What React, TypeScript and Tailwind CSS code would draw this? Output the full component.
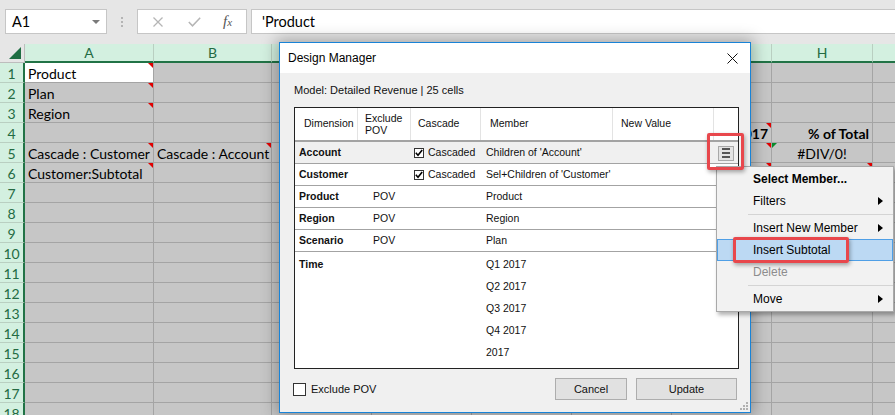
import React from "react";

type Cell = {
  text?: string;
  bold?: boolean;
  align?: "left" | "right" | "center";
  red?: boolean;
  green?: boolean;
  white?: boolean;
};

const COLS = ["A", "B", "C", "D", "E", "F", "G", "H", "I"];

const CELLS: Record<string, Cell> = {
  A1: { text: "Product", red: true, white: true },
  A2: { text: "Plan", red: true },
  A3: { text: "Region", red: true },
  A5: { text: "Cascade : Customer", red: true },
  B5: { text: "Cascade : Account", red: true },
  A6: { text: "Customer:Subtotal", red: true },
  G4: { text: "2017", bold: true, align: "right", red: true },
  H4: { text: "% of Total", bold: true, align: "right" },
  G5: { red: true },
  H5: { text: "#DIV/0!", align: "center", green: true },
  G6: { red: true },
  H6: { red: true },
};

const ROWS = Array.from({ length: 18 }, (_, i) => i + 1);

function SheetCell({ id }: { id: string }) {
  const c = CELLS[id] ?? {};
  const align =
    c.align === "right" ? "justify-end" : c.align === "center" ? "justify-center" : "justify-start";
  return (
    <div
      className={`relative flex h-[20px] items-center overflow-visible whitespace-nowrap border-r border-b border-[#a4a4a4] px-[3px] pt-[1px] text-[14px] text-black ${
        c.white ? "bg-white" : "bg-[#c6c6c6]"
      } ${align} ${c.bold ? "font-bold" : ""}`}
    >
      {c.text}
      {c.red ? (
        <span className="absolute top-0 right-0 h-0 w-0 border-t-[5px] border-l-[5px] border-t-[#e00000] border-l-transparent" />
      ) : null}
      {c.green ? (
        <span className="absolute top-0 left-0 h-0 w-0 border-t-[5px] border-r-[5px] border-t-[#0a8a2c] border-r-transparent" />
      ) : null}
    </div>
  );
}

function FormulaBar() {
  return (
    <div className="flex h-[44px] items-start pt-[9px]">
      <div className="ml-[5px] flex h-[25px] w-[102px] items-center justify-between border border-[#c6c6c6] bg-white pr-[6px] pl-[6px] text-[14.5px] text-black">
        <span>A1</span>
        <span className="h-0 w-0 border-x-[4px] border-t-[4px] border-x-transparent border-t-[#7a7a7a]" />
      </div>
      <div className="ml-[14px] flex h-[25px] flex-col items-center justify-center gap-[2px]">
        <span className="h-[2px] w-[2px] bg-[#b4b4b4]" />
        <span className="h-[2px] w-[2px] bg-[#b4b4b4]" />
        <span className="h-[2px] w-[2px] bg-[#b4b4b4]" />
      </div>
      <div className="ml-[14px] flex h-[25px] w-[110px] items-center border border-[#c6c6c6] bg-white pl-[15px]">
        <svg width="10" height="10" viewBox="0 0 10 10">
          <path d="M0.5 0.5 L9.5 9.5 M9.5 0.5 L0.5 9.5" stroke="#b5b5b5" strokeWidth="1.3" fill="none" />
        </svg>
        <svg className="ml-[25px]" width="13" height="10" viewBox="0 0 13 10">
          <path d="M0.8 5 L4.5 8.8 L12.2 0.8" stroke="#b5b5b5" strokeWidth="1.5" fill="none" />
        </svg>
        <span className="ml-[22px] font-['Liberation_Serif',serif] text-[15px] italic leading-none text-[#555]">
          f<span className="text-[11px]">x</span>
        </span>
      </div>
      <div className="mr-[-4px] ml-[4px] flex h-[25px] flex-1 items-center border border-[#c6c6c6] bg-white pl-[10px] text-[14.5px] text-black">
        'Product
      </div>
    </div>
  );
}

function Sheet() {
  return (
    <div className="grid w-[973px] grid-cols-[25px_129px_118px_100px_100px_100px_100px_100px_101px_100px] text-[#246b43]">
      <div className="relative h-[19px] border-r border-b border-[#bdbdbd] bg-[#e6e6e6]">
        <svg className="absolute right-[3px] bottom-[3px]" width="12" height="12" viewBox="0 0 12 12">
          <polygon points="12,0 12,12 0,12" fill="#1f6e43" />
        </svg>
      </div>
      {COLS.map((c) => (
        <div
          key={c}
          className="flex h-[19px] items-center justify-center border-r border-b-2 border-r-[#b9cfc1] border-b-[#217346] bg-[#d3f0e0] text-[14px]"
        >
          {c}
        </div>
      ))}
      {ROWS.map((r) => (
        <React.Fragment key={r}>
          <div className="flex h-[20px] items-center justify-center border-r-2 border-b border-r-[#217346] border-b-[#b9cfc1] bg-[#d3f0e0] pt-[1px] text-[14px]">
            {r}
          </div>
          {COLS.map((c) => (
            <SheetCell key={c} id={`${c}${r}`} />
          ))}
        </React.Fragment>
      ))}
    </div>
  );
}

function SmallCheck() {
  return (
    <span className="flex h-[10px] w-[10px] items-center justify-center border border-[#333] bg-white">
      <svg width="8" height="8" viewBox="0 0 8 8">
        <path d="M0.8 3.8 L3 6.2 L7.2 1" stroke="#000" strokeWidth="1.6" fill="none" />
      </svg>
    </span>
  );
}

const TABLE_COLS = "grid grid-cols-[63px_53px_70px_132px_101px_24px]";

const DIMS = [
  { dim: "Account", pov: "", cascade: true, member: "Children of 'Account'", menu: true, shaded: true },
  { dim: "Customer", pov: "", cascade: true, member: "Sel+Children of 'Customer'" },
  { dim: "Product", pov: "POV", member: "Product" },
  { dim: "Region", pov: "POV", member: "Region" },
  { dim: "Scenario", pov: "POV", member: "Plan" },
];

function DesignManager() {
  return (
    <div className="absolute top-[42px] left-[279px] flex h-[371px] w-[472px] flex-col border border-[#1883d7] bg-[#f0f0f0] font-['Liberation_Sans',Arial,sans-serif] text-[#111] shadow-[0_0_14px_3px_rgba(0,0,0,0.28)]">
      <div className="flex h-[30px] shrink-0 items-center justify-between bg-white pr-[12px] pl-[8px] text-[12px] text-black">
        <span>Design Manager</span>
        <svg width="11" height="11" viewBox="0 0 11 11">
          <path d="M0.5 0.5 L10.5 10.5 M10.5 0.5 L0.5 10.5" stroke="#111" strokeWidth="1" fill="none" />
        </svg>
      </div>
      <div className="flex h-[34px] shrink-0 items-center pl-[14px] text-[11px]">Model: Detailed Revenue | 25 cells</div>

      <div className="ml-[14px] flex h-[262px] w-[445px] shrink-0 flex-col border border-[#222] bg-white text-[10.5px]">
        <div className={`${TABLE_COLS} h-[34px] border-b-2 border-[#a3a3a3]`}>
          <div className="flex items-center border-r border-[#e3e3e3] pl-[9px]">Dimension</div>
          <div className="flex items-center border-r border-[#e3e3e3] pl-[7px] leading-[12px]">
            Exclude
            <br />
            POV
          </div>
          <div className="flex items-center border-r border-[#e3e3e3] pl-[7px]">Cascade</div>
          <div className="flex items-center border-r border-[#e3e3e3] pl-[9px]">Member</div>
          <div className="flex items-center border-r border-[#e3e3e3] pl-[8px]">New Value</div>
          <div />
        </div>
        {DIMS.map((d) => (
          <div
            key={d.dim}
            className={`${TABLE_COLS} h-[22px] items-center border-b border-[#a3a3a3] pt-[1px] ${d.shaded ? "bg-[#f0f0f0]" : "bg-white"}`}
          >
            <div className="pl-[4px] font-bold">{d.dim}</div>
            <div className="pl-[15px]">{d.pov}</div>
            <div className="flex items-center pl-[3px]">
              {d.cascade ? (
                <>
                  <SmallCheck />
                  <span className="ml-[4px]">Cascaded</span>
                </>
              ) : null}
            </div>
            <div className="pl-[5px] whitespace-nowrap">{d.member}</div>
            <div />
            <div className="flex justify-center">
              {d.menu ? (
                <span className="flex h-[15px] w-[16px] flex-col items-center justify-center gap-[2px] border border-[#a9a9a9] bg-[#e3e3e3]">
                  <span className="h-[2px] w-[8px] bg-[#555]" />
                  <span className="h-[2px] w-[8px] bg-[#555]" />
                  <span className="h-[2px] w-[8px] bg-[#555]" />
                </span>
              ) : null}
            </div>
          </div>
        ))}
        <div className={`${TABLE_COLS} pt-[2px]`}>
          <div className="flex h-[22px] items-center pl-[4px] font-bold">Time</div>
          <div />
          <div />
          <div className="flex flex-col pl-[5px]">
            {["Q1 2017", "Q2 2017", "Q3 2017", "Q4 2017", "2017"].map((t) => (
              <div key={t} className="flex h-[22px] items-center">
                {t}
              </div>
            ))}
          </div>
          <div />
          <div />
        </div>
      </div>

      <div className="flex h-[40px] shrink-0 items-center pr-[13px] pl-[13px] text-[11px]">
        <span className="h-[13px] w-[13px] border border-[#333] bg-white" />
        <span className="ml-[5px]">Exclude POV</span>
        <div className="ml-auto flex gap-[9px]">
          <div className="flex h-[22px] w-[72px] items-center justify-center border border-[#adadad] bg-[#e1e1e1]">Cancel</div>
          <div className="flex h-[22px] w-[101px] items-center justify-center border border-[#adadad] bg-[#e1e1e1]">Update</div>
        </div>
      </div>
      <svg className="absolute right-[2px] bottom-[2px]" width="9" height="9" viewBox="0 0 9 9">
        <g fill="#b0b0b0">
          <rect x="7" y="1" width="2" height="2" />
          <rect x="4" y="4" width="2" height="2" />
          <rect x="7" y="4" width="2" height="2" />
          <rect x="1" y="7" width="2" height="2" />
          <rect x="4" y="7" width="2" height="2" />
          <rect x="7" y="7" width="2" height="2" />
        </g>
      </svg>
    </div>
  );
}

function Arrow() {
  return (
    <svg width="5" height="8" viewBox="0 0 5 8">
      <polygon points="0,0 5,4 0,8" fill="#000" />
    </svg>
  );
}

function MenuItem({
  label,
  bold,
  sub,
  disabled,
  active,
}: {
  label: string;
  bold?: boolean;
  sub?: boolean;
  disabled?: boolean;
  active?: boolean;
}) {
  return (
    <div
      className={`flex h-[22px] items-center border pr-[9px] pl-[35px] ${
        active ? "border-[#4f9fe6] bg-[#bcd9f3]" : "border-transparent"
      } ${bold ? "font-bold" : ""} ${disabled ? "text-[#8d8d8d]" : "text-black"}`}
    >
      <span>{label}</span>
      {sub ? (
        <span className="ml-auto">
          <Arrow />
        </span>
      ) : null}
    </div>
  );
}

function Separator() {
  return (
    <div className="flex h-[5px] items-center pl-[31px]">
      <div className="h-px flex-1 bg-[#d4d4d4]" />
    </div>
  );
}

function ContextMenu() {
  return (
    <div className="absolute top-[166px] left-[716px] flex w-[178px] flex-col border border-[#a9a9a9] bg-[#f2f2f2] py-[1px] font-['Liberation_Sans',Arial,sans-serif] text-[12px] shadow-[2px_3px_4px_rgba(0,0,0,0.3)]">
      <MenuItem label="Select Member..." bold />
      <MenuItem label="Filters" sub />
      <Separator />
      <MenuItem label="Insert New Member" sub />
      <MenuItem label="Insert Subtotal" active />
      <MenuItem label="Delete" disabled />
      <Separator />
      <MenuItem label="Move" sub />
    </div>
  );
}

export default function App() {
  return (
    <div className="relative h-[415px] w-[895px] overflow-hidden bg-[#e6e6e6] font-['Lato','Liberation_Sans',sans-serif]">
      <FormulaBar />
      <Sheet />
      <DesignManager />
      <ContextMenu />
      <div className="absolute top-[133px] left-[707px] h-[37px] w-[37px] rounded-[2px] border-[3px] border-[#e8474c] shadow-[1px_2px_4px_rgba(0,0,0,0.35)]" />
      <div className="absolute top-[237px] left-[733px] h-[26px] w-[116px] rounded-[2px] border-[3px] border-[#e8474c] shadow-[1px_2px_4px_rgba(0,0,0,0.35)]" />
    </div>
  );
}
